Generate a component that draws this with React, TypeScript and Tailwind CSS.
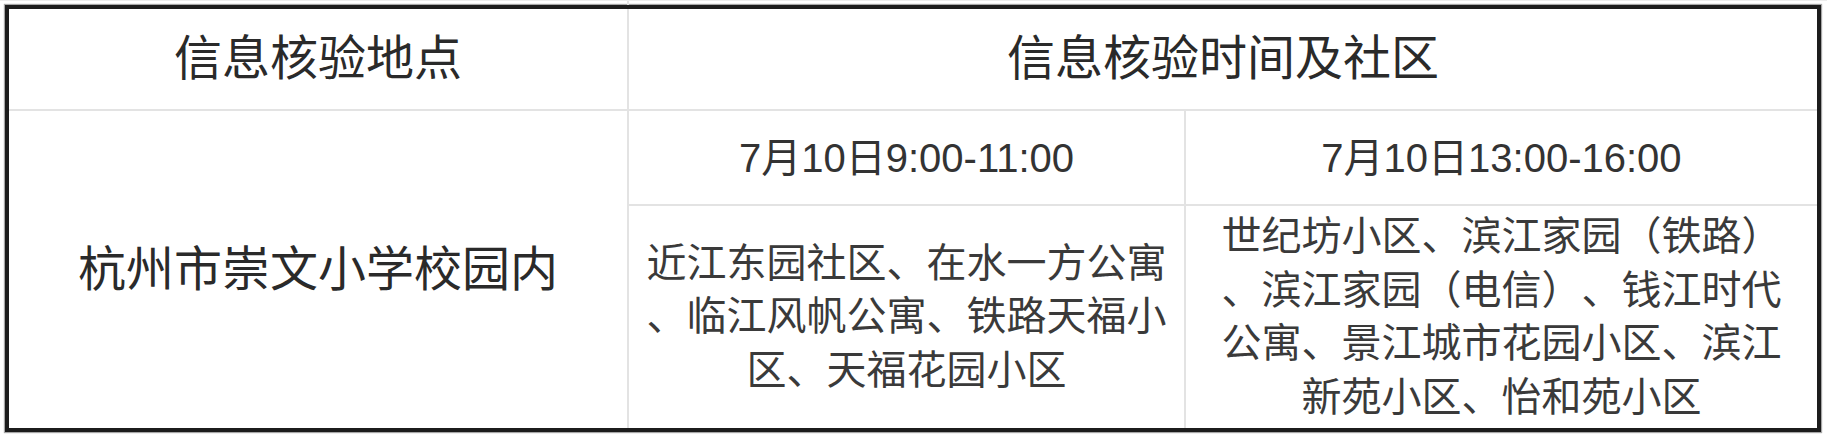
import React from 'react';

const font = { fontFamily: '"Liberation Sans", "Noto Sans CJK SC", sans-serif' };

const leftLines = ['近江东园社区、在水一方公寓', '、临江风帆公寓、铁路天福小', '区、天福花园小区'];
const rightLines = ['世纪坊小区、滨江家园（铁路）', '、滨江家园（电信）、钱江时代', '公寓、景江城市花园小区、滨江', '新苑小区、怡和苑小区'];

function Lines({ lines }: { lines: string[] }) {
  return (
    <div className="text-[40px] leading-[53.5px] text-[#3a3a3a] text-center whitespace-nowrap [text-spacing-trim:space-all]">
      {lines.map(l => <div key={l}>{l}</div>)}
    </div>
  );
}

export default function App() {
  return (
    <div className="w-[1827px] h-[437px] bg-white overflow-hidden" style={font}>
      {/* leftover grid lines from the row above */}
      <div className="flex h-[5px] border-t border-[#ececec]">
        <div className="w-[629px] border-r-2 border-[#e3e3e3]" />
      </div>

      <div className="ml-[5px] w-[1816px] border-4 border-[#1c1c1c] shadow-[0_0_1px_1px_rgba(0,0,0,0.35)]">
        <div className="grid grid-cols-[618px_555px_1fr] grid-rows-[100px_93px_222px] gap-[2px] bg-[#e3e3e3]">
          <div className="bg-white flex items-center justify-center text-[48px] text-[#2a2a2a]">信息核验地点</div>
          <div className="col-span-2 bg-white flex items-center justify-center text-[48px] text-[#2a2a2a]">信息核验时间及社区</div>

          <div className="row-span-2 bg-white flex items-center justify-center text-[48px] text-[#2a2a2a]">杭州市崇文小学校园内</div>
          <div className="bg-white flex items-center justify-center text-[40px] text-[#333]">7月10日9:00-11:00</div>
          <div className="bg-white flex items-center justify-center text-[40px] text-[#333]">7月10日13:00-16:00</div>

          <div className="bg-white flex items-center justify-center"><Lines lines={leftLines} /></div>
          <div className="bg-white flex items-center justify-center"><Lines lines={rightLines} /></div>
        </div>
      </div>
    </div>
  );
}
